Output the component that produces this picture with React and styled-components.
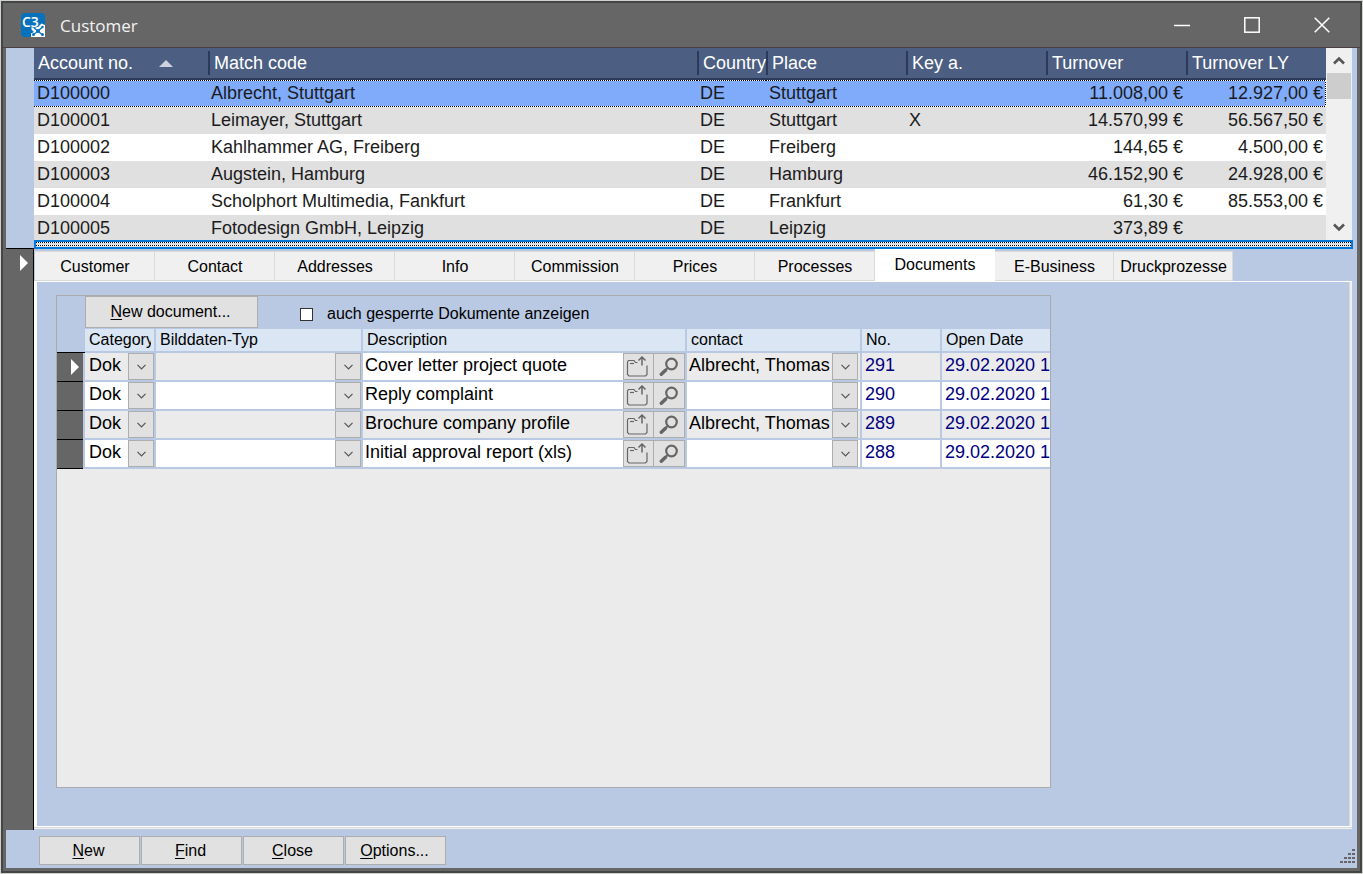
import React, { useState } from "react";
import styled, { createGlobalStyle, css } from "styled-components";

const GlobalStyle = createGlobalStyle`
  * {
    box-sizing: border-box;
  }
  body {
    margin: 0;
    font-family: "Liberation Sans", Arial, sans-serif;
    font-size: 16px;
    color: #000;
  }
  button, input, select {
    font: inherit;
    color: inherit;
    margin: 0;
    padding: 0;
    border: none;
    border-radius: 0;
  }
`;

const blue = "#b9c9e4";
const grey = "#666666";
const dots = "repeating-linear-gradient(90deg, #000 0 1px, #fff 1px 2px)";
const dotsDown = "repeating-linear-gradient(180deg, #000 0 1px, #fff 1px 2px)";

const Frame = styled.div`
  height: 100vh;
  min-height: 600px;
  border: 1px solid #cfd1cf;
`;

const Window = styled.div`
  height: 100%;
  display: flex;
  flex-direction: column;
  border: 2px solid #444645;
  background: ${grey};
`;

const TitleBar = styled.header`
  height: 45px;
  flex: none;
  display: flex;
  align-items: center;
  padding: 0 3px 0 18px;
  border-bottom: 1px solid #4a4043;
`;

const Title = styled.h1`
  flex: 1;
  margin: 0 0 0 14px;
  font: 400 17px "Open Sans", "Noto Sans", sans-serif;
  color: #f2f2f2;
`;

const WindowButton = styled.button`
  width: 70px;
  height: 44px;
  display: flex;
  align-items: center;
  justify-content: center;
  background: none;
  &:hover {
    background: #7a7a7a;
  }
`;

const WindowControls = styled.div`
  display: flex;
`;

const Content = styled.div`
  flex: 1;
  min-height: 0;
  display: flex;
  flex-direction: column;
  margin: 0 3px 3px;
  background: ${blue};
`;

const ListArea = styled.section`
  height: 192px;
  flex: none;
  display: flex;
  overflow: hidden;
  padding: 0 5px 0 28px;
`;

const ListTable = styled.table`
  flex: 1;
  width: 0;
  height: 194px;
  table-layout: fixed;
  border-collapse: separate;
  border-spacing: 0;
  font-size: 18px;
  line-height: 26px;
  color: #1b1b1b;
`;

const ListHead = styled.th`
  width: ${({ $width }) => $width || "auto"};
  height: 32px;
  padding: 0;
  overflow: hidden;
  background: #4c5f82;
  border-bottom: 2px solid #2b3a5a;
  color: #fff;
  font-weight: 400;
  text-align: left;
  white-space: nowrap;
`;

const HeadLabel = styled.div`
  height: 24px;
  display: flex;
  align-items: center;
  gap: 26px;
  padding-left: 4px;
  line-height: 22px;
  border-left: ${({ $first }) => ($first ? "none" : "2px solid #2b3a5a")};
`;

const ListCell = styled.td`
  height: 27px;
  padding: 0 3px 1px;
  white-space: nowrap;
  text-align: ${({ $right }) => ($right ? "right" : "left")};
`;

const ListRow = styled.tr`
  background: ${({ $selected }) => ($selected ? "#80aafa" : "#fff")};
  &:nth-child(even) {
    background: #e0e0e0;
  }
  ${({ $selected }) =>
    $selected &&
    css`
      ${ListCell} {
        background: ${dots} top / 100% 1px no-repeat,
          ${dots} bottom / 100% 1px no-repeat;
      }
      ${ListCell}:last-child {
        background: ${dots} top / 100% 1px no-repeat,
          ${dots} bottom / 100% 1px no-repeat,
          ${dotsDown} right / 1px 100% no-repeat;
      }
    `}
`;

const ScrollBar = styled.div`
  width: 26px;
  flex: none;
  display: flex;
  flex-direction: column;
  background: #f0f0f0;
`;

const ScrollButton = styled.button`
  height: 25px;
  display: flex;
  align-items: center;
  justify-content: center;
  background: #f0f0f0;
`;

const ScrollTrack = styled.div`
  flex: 1;
  padding: 0 1px;
`;

const ScrollThumb = styled.div`
  height: 26px;
  background: #cdcdcd;
`;

const SplitRow = styled.div`
  height: 9px;
  flex: none;
  display: flex;
  padding-right: 4px;
`;

const SplitGutter = styled.div`
  width: 28px;
  border-bottom: 1px solid #000;
`;

const Splitter = styled.div`
  flex: 1;
  border: 2px solid #0078d7;
  background: ${dots} top / 100% 1px no-repeat,
    ${dots} 0 3px / 100% 1px no-repeat, #e1e1e1;
`;

const DetailArea = styled.section`
  flex: 1;
  min-height: 0;
  display: flex;
  padding-right: 5px;
`;

const RecordGutter = styled.div`
  width: 28px;
  flex: none;
  padding: 6px 5px 0 0;
  text-align: right;
  line-height: 0;
  background: ${grey};
  border-right: 1px solid #000;
`;

const Detail = styled.div`
  flex: 1;
  min-width: 0;
  display: flex;
  flex-direction: column;
  padding-bottom: 3px;
`;

const Tabs = styled.div`
  height: 32px;
  flex: none;
  display: flex;
  align-items: flex-end;
  padding-left: 1px;
`;

const Tab = styled.button`
  width: ${({ $narrow }) => ($narrow ? "119px" : "120px")};
  height: 30px;
  padding: 1px 0 0 1px;
  background: #f0f0f0;
  border: 1px solid #dadada;
  border-left: none;
  white-space: nowrap;
  &[aria-selected="true"] {
    height: 32px;
    padding: 0;
    background: #fff;
    border: none;
  }
`;

const TabPanel = styled.div`
  flex: 1;
  min-height: 0;
  display: flex;
  padding: 13px 20px 38px 19px;
  border: solid #fff;
  border-width: 1px 0 1px 3px;
  box-shadow: inset -2px 0 0 #f0f0f0, inset -3px 0 0 #d9d9d9,
    0 1px 0 #d9d9d9, 0 2px 0 #f0f0f0;
`;

const SubForm = styled.div`
  flex: 0 1 995px;
  min-width: 0;
  overflow: hidden;
  border: 1px solid #a8aab0;
  background: #ebebeb;
`;

const SubHeader = styled.div`
  height: 33px;
  display: flex;
  align-items: flex-start;
  padding-left: 28px;
  background: ${blue};
`;

const PushButton = styled.button`
  width: ${({ $wide }) => ($wide ? "173px" : "101px")};
  height: ${({ $wide }) => ($wide ? "32px" : "29px")};
  padding-right: 2px;
  background: #e1e1e1;
  border: 1px solid #adadad;
  text-underline-offset: 2px;
  &:active {
    background: #cce4f7;
  }
`;

const CheckLabel = styled.label`
  display: flex;
  align-items: center;
  gap: 14px;
  height: 36px;
  margin-left: 42px;
`;

const CheckBox = styled.input`
  appearance: none;
  width: 13px;
  height: 13px;
  background: #fff;
  border: 1px solid #333;
  &:checked {
    background: #333;
    box-shadow: inset 0 0 0 2px #fff;
  }
`;

const DocTable = styled.table`
  width: 100%;
  table-layout: fixed;
  border-collapse: separate;
  border-spacing: 0;
`;

const DocHead = styled.th`
  width: ${({ $width }) => $width};
  height: 24px;
  padding: 0 3px 0 4px;
  background: #dae6f3;
  border: solid ${blue};
  border-width: 0 2px 2px 0;
  font-weight: 400;
  text-align: left;
  &:last-child {
    border-right: none;
  }
`;

const DocHeadLabel = styled.div`
  overflow: hidden;
  white-space: nowrap;
`;

const SelectorHead = styled.th`
  width: 28px;
  padding: 0;
  background: ${blue};
  border-bottom: 1px solid #000;
`;

const Selector = styled.td`
  padding: 0 4px 2px 0;
  text-align: right;
  line-height: 0;
  background: ${grey};
  border: solid ${blue};
  border-width: 0 2px 0 0;
  box-shadow: inset 0 -1px 0 #000;
`;

const DocCell = styled.td`
  height: 29px;
  padding: 0;
  border: solid ${blue};
  border-width: 0 2px 2px 0;
  font-size: 18px;
  &:last-child {
    border-right: none;
  }
`;

const DocRow = styled.tr`
  background: #fff;
  &:nth-child(odd) {
    background: #ebebeb;
  }
`;

const field = css`
  width: 100%;
  min-width: 0;
  height: 27px;
  padding: 0 0 3px 2px;
  background: transparent;
  outline: none;
`;

const TextField = styled.input`
  ${field}
  ${({ $navy }) =>
    $navy &&
    css`
      padding-left: 3px;
      color: #000080;
    `}
  ${({ $current }) => $current && "background: #fff;"}
`;

const Combo = styled.div`
  display: grid;
  grid-template-columns: minmax(0, 1fr) 26px;
  padding-right: ${({ $inset }) => ($inset ? "2px" : "0")};
`;

const Select = styled.select`
  ${field}
  grid-area: 1 / 1 / 2 / 3;
  appearance: none;
  padding-left: ${({ $indent }) => ($indent ? "4px" : "2px")};
`;

const ComboArrow = styled.span`
  grid-area: 1 / 2;
  height: 27px;
  display: flex;
  align-items: center;
  justify-content: center;
  background: #e1e1e1;
  border: 1px solid #adadad;
  pointer-events: none;
`;

const DescriptionBox = styled.div`
  display: flex;
`;

const IconButton = styled.button`
  width: 31px;
  height: 27px;
  flex: none;
  display: flex;
  align-items: center;
  justify-content: center;
  padding-right: 2px;
  background: #e1e1e1;
  border: 1px solid #adadad;
  & + & {
    padding-right: 0;
    border-left: none;
  }
`;

const Footer = styled.footer`
  height: 38px;
  flex: none;
  display: flex;
  align-items: center;
  gap: 1px;
  padding: 3px 2px 0 33px;
`;

const Grip = styled.svg`
  align-self: flex-end;
  margin: 0 0 5px auto;
`;

const Logo = () => (
  <svg width="25" height="25" viewBox="0 0 25 25">
    <rect width="24" height="24" rx="4" fill="#0672bd" />
    <path d="M10 24v-3.500l3-1.500-2.500-2.500V14l3-2 3.500 2 3.500-3.500L24 12v12z" fill="#fff" />
    <path d="M12 22l5-4 4.500 4M17 18l4.500-4M17 18l-4-3" stroke="#0672bd" strokeWidth="1.300" fill="none" />
    <circle cx="12.500" cy="21.500" r="1.500" fill="#0672bd" />
    <circle cx="17" cy="18" r="2" fill="#0672bd" />
    <circle cx="21.500" cy="21.500" r="1.500" fill="#0672bd" />
    <circle cx="21.500" cy="14" r="1.200" fill="#0672bd" />
    <text
      x="1"
      y="14"
      fontSize="14"
      fontWeight="600"
      fill="#fff"
      stroke="#0672bd"
      strokeWidth="1.500"
      paintOrder="stroke"
      fontFamily="Open Sans, sans-serif"
    >
      C3
    </text>
  </svg>
);

const RecordArrow = () => (
  <svg width="8" height="16" viewBox="0 0 8 16">
    <path d="M0 0l8 8-8 8z" fill="#fff" />
  </svg>
);

const ScrollArrow = ({ down }) => (
  <svg width="12" height="9" viewBox="0 0 12 9" fill="none" stroke="#555" strokeWidth="2.6">
    <path d={down ? "M1 1.5l5 5 5-5" : "M1 7.5l5-5 5 5"} />
  </svg>
);

const ComboChevron = () => (
  <svg width="9" height="6" viewBox="0 0 9 6" fill="none" stroke="#555" strokeWidth="1.2">
    <path d="M.5 .8l4 4 4-4" />
  </svg>
);

const OpenIcon = () => (
  <svg width="24" height="21" viewBox="0 0 24 21" fill="none" stroke="#666" strokeWidth="1.2">
    <path d="M11.500 6.500H9.500L8 4.500H2.500l-1 1.500v12.500l1.500 1.500h16.500l1.500-1.500V9.500" />
    <path d="M4 7.500h4" />
    <path d="M16 9.500V1M12.500 4.500L16 1l3.500 3.500" strokeWidth="1.5" />
  </svg>
);

const SearchIcon = () => (
  <svg width="20" height="20" viewBox="0 0 20 20" fill="none" stroke="#666">
    <circle cx="12.500" cy="7" r="5.300" strokeWidth="2.200" />
    <path d="M8.700 11L6.500 13" strokeWidth="1.800" />
    <path d="M6.500 13.200L2.300 17.300" strokeWidth="3.400" strokeLinecap="round" />
  </svg>
);

const customers = [
  ["D100000", "Albrecht, Stuttgart", "DE", "Stuttgart", "", "11.008,00 €", "12.927,00 €"],
  ["D100001", "Leimayer, Stuttgart", "DE", "Stuttgart", "X", "14.570,99 €", "56.567,50 €"],
  ["D100002", "Kahlhammer AG, Freiberg", "DE", "Freiberg", "", "144,65 €", "4.500,00 €"],
  ["D100003", "Augstein, Hamburg", "DE", "Hamburg", "", "46.152,90 €", "24.928,00 €"],
  ["D100004", "Scholphort Multimedia, Fankfurt", "DE", "Frankfurt", "", "61,30 €", "85.553,00 €"],
  ["D100005", "Fotodesign GmbH, Leipzig", "DE", "Leipzig", "", "373,89 €", ""],
];

const listColumns = [
  { label: "Account no.", width: "174px" },
  { label: "Match code" },
  { label: "Country", width: "69px" },
  { label: "Place", width: "140px" },
  { label: "Key a.", width: "140px" },
  { label: "Turnover", width: "140px" },
  { label: "Turnover LY", width: "140px" },
];

const tabs = [
  "Customer",
  "Contact",
  "Addresses",
  "Info",
  "Commission",
  "Prices",
  "Processes",
  "Documents",
  "E-Business",
  "Druckprozesse",
];

const docColumns = [
  { label: "Category", width: "71px" },
  { label: "Bilddaten-Typ", width: "207px" },
  { label: "Description", width: "324px" },
  { label: "contact", width: "175px" },
  { label: "No.", width: "80px" },
  { label: "Open Date", width: "auto" },
];

const documents = [
  { text: "Cover letter project quote", contact: "Albrecht, Thomas", no: "291" },
  { text: "Reply complaint", contact: "", no: "290" },
  { text: "Brochure company profile", contact: "Albrecht, Thomas", no: "289" },
  { text: "Initial approval report (xls)", contact: "", no: "288" },
];

const ComboBox = ({ label, value, indent, inset }) => (
  <Combo $inset={inset}>
    <Select aria-label={label} defaultValue={value} $indent={indent}>
      <option value={value}>{value}</option>
    </Select>
    <ComboArrow>
      <ComboChevron />
    </ComboArrow>
  </Combo>
);

const CustomerList = () => {
  const [selected, setSelected] = useState(0);

  return (
    <ListArea>
      <ListTable>
        <thead>
          <tr>
            {listColumns.map((col, index) => (
              <ListHead key={col.label} $width={col.width}>
                <HeadLabel $first={index === 0}>
                  {col.label}
                  {index === 0 && (
                    <svg width="14" height="7" viewBox="0 0 14 7">
                      <path d="M0 7l7-7 7 7z" fill="#ccd3df" />
                    </svg>
                  )}
                </HeadLabel>
              </ListHead>
            ))}
          </tr>
        </thead>
        <tbody>
          {customers.map((row, index) => (
            <ListRow
              key={row[0]}
              $selected={index === selected}
              onClick={() => setSelected(index)}
            >
              {row.map((value, i) => (
                <ListCell key={i} $right={i > 4}>
                  {value}
                </ListCell>
              ))}
            </ListRow>
          ))}
        </tbody>
      </ListTable>
      <ScrollBar>
        <ScrollButton aria-label="Scroll up">
          <ScrollArrow />
        </ScrollButton>
        <ScrollTrack>
          <ScrollThumb />
        </ScrollTrack>
        <ScrollButton aria-label="Scroll down">
          <ScrollArrow down />
        </ScrollButton>
      </ScrollBar>
    </ListArea>
  );
};

const Documents = () => (
  <SubForm>
    <SubHeader>
      <PushButton $wide>
        <u>N</u>ew document...
      </PushButton>
      <CheckLabel>
        <CheckBox type="checkbox" />
        auch gesperrte Dokumente anzeigen
      </CheckLabel>
    </SubHeader>
    <DocTable>
      <thead>
        <tr>
          <SelectorHead />
          {docColumns.map((col) => (
            <DocHead key={col.label} $width={col.width}>
              <DocHeadLabel>{col.label}</DocHeadLabel>
            </DocHead>
          ))}
        </tr>
      </thead>
      <tbody>
        {documents.map((doc, index) => (
          <DocRow key={doc.no}>
            <Selector>{index === 0 && <RecordArrow />}</Selector>
            <DocCell>
              <ComboBox label="Category" value="Dok" indent />
            </DocCell>
            <DocCell>
              <ComboBox label="Bilddaten-Typ" value="" />
            </DocCell>
            <DocCell>
              <DescriptionBox>
                <TextField
                  aria-label="Description"
                  defaultValue={doc.text}
                  $current={index === 0}
                />
                <IconButton aria-label="Open">
                  <OpenIcon />
                </IconButton>
                <IconButton aria-label="Search">
                  <SearchIcon />
                </IconButton>
              </DescriptionBox>
            </DocCell>
            <DocCell>
              <ComboBox label="contact" value={doc.contact} inset />
            </DocCell>
            <DocCell>
              <TextField aria-label="No." defaultValue={doc.no} $navy />
            </DocCell>
            <DocCell>
              <TextField aria-label="Open Date" defaultValue="29.02.2020 1" $navy />
            </DocCell>
          </DocRow>
        ))}
      </tbody>
    </DocTable>
  </SubForm>
);

const App = () => {
  const [tab, setTab] = useState("Documents");

  return (
    <>
      <GlobalStyle />
      <Frame>
        <Window>
          <TitleBar>
            <Logo />
            <Title>Customer</Title>
            <WindowControls>
              <WindowButton aria-label="Minimize">
                <svg width="16" height="16" viewBox="0 0 16 16">
                  <path d="M0 8.500h16" stroke="#fff" strokeWidth="1.500" />
                </svg>
              </WindowButton>
              <WindowButton aria-label="Maximize">
                <svg width="16" height="16" viewBox="0 0 16 16">
                  <rect x=".8" y=".8" width="14.400" height="14.400" fill="none" stroke="#fff" strokeWidth="1.500" />
                </svg>
              </WindowButton>
              <WindowButton aria-label="Close">
                <svg width="16" height="16" viewBox="0 0 16 16">
                  <path d="M.7 .7l14.600 14.600M15.300 .7L.7 15.300" stroke="#fff" strokeWidth="1.500" />
                </svg>
              </WindowButton>
            </WindowControls>
          </TitleBar>
          <Content>
            <CustomerList />
            <SplitRow>
              <SplitGutter />
              <Splitter />
            </SplitRow>
            <DetailArea>
              <RecordGutter>
                <RecordArrow />
              </RecordGutter>
              <Detail>
                <Tabs role="tablist">
                  {tabs.map((name, index) => (
                    <Tab
                      key={name}
                      role="tab"
                      aria-selected={name === tab}
                      $narrow={index > 7}
                      onClick={() => setTab(name)}
                    >
                      {name}
                    </Tab>
                  ))}
                </Tabs>
                <TabPanel role="tabpanel">
                  <Documents />
                </TabPanel>
              </Detail>
            </DetailArea>
            <Footer>
              <PushButton>
                <u>N</u>ew
              </PushButton>
              <PushButton>
                <u>F</u>ind
              </PushButton>
              <PushButton>
                <u>C</u>lose
              </PushButton>
              <PushButton>
                <u>O</u>ptions...
              </PushButton>
              <Grip width="16" height="14" viewBox="0 0 16 14" fill="#666">
                {[
                  [13, 0],
                  [9, 4],
                  [13, 4],
                  [5, 8],
                  [9, 8],
                  [13, 8],
                  [1, 12],
                  [5, 12],
                  [9, 12],
                  [13, 12],
                ].map(([x, y]) => (
                  <rect key={`${x}-${y}`} x={x} y={y} width="3" height="2" />
                ))}
              </Grip>
            </Footer>
          </Content>
        </Window>
      </Frame>
    </>
  );
};

export default App;
